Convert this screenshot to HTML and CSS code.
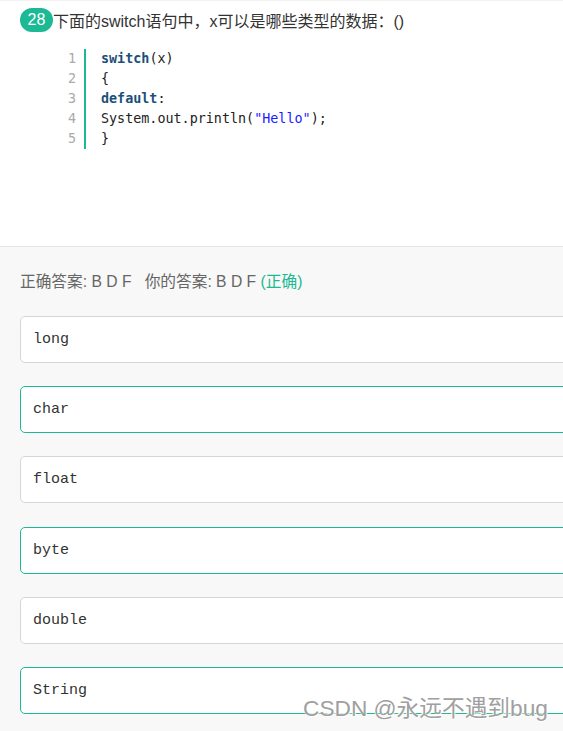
FILE: index.html
```
<!DOCTYPE html>
<html lang="zh">
<head>
<meta charset="utf-8">
<link rel="stylesheet" href="styles.css">
</head>
<body>
<div class="page">
  <section class="question">
    <div class="title">
      <span class="badge">28</span>
      <span class="title-text">下面的switch语句中，x可以是哪些类型的数据：()</span>
    </div>
    <div class="code">
      <div class="nums">
        <div>1</div><div>2</div><div>3</div><div>4</div><div>5</div>
      </div>
      <div class="lines">
        <div><span class="kw">switch</span>(x)</div>
        <div>{</div>
        <div><span class="kw">default</span>:</div>
        <div>System.out.println(<span class="str">"Hello"</span>);</div>
        <div>}</div>
      </div>
    </div>
  </section>
  <section class="answers">
    <div class="result">正确答案: B D F &nbsp; 你的答案: B D F <span class="ok">(正确)</span></div>
    <div class="options">
      <div class="opt">long</div>
      <div class="opt sel">char</div>
      <div class="opt">float</div>
      <div class="opt sel">byte</div>
      <div class="opt">double</div>
      <div class="opt sel">String</div>
    </div>
  </section>
  <div class="watermark">CSDN @永远不遇到bug</div>
</div>
</body>
</html>
```
FILE: styles.css
```
html, body {
  margin: 0;
  padding: 0;
  overflow: hidden;
}
body {
  font-family: "Liberation Sans", "Noto Sans CJK SC", sans-serif;
  color: #333;
  background: #f8f8f8;
}
.page {
  position: relative;
  width: 563px;
  height: 731px;
  overflow: hidden;
}
.question {
  background: #fff;
  height: 247px;
  border-bottom: 1px solid #e6e6e6;
  box-sizing: border-box;
  padding: 8px 20px 0;
  border-top: 1px solid #f2f2f2;
}
.title {
  display: flex;
  align-items: center;
  height: 24px;
  margin-top: -1px;
}
.badge {
  display: inline-flex;
  align-items: center;
  justify-content: center;
  width: 33px;
  height: 24px;
  border-radius: 12px;
  background: #1cb994;
  color: #fff;
  font-size: 16px;
}
.title-text {
  font-size: 16px;
  color: #333;
  margin-top: -1px;
}
.code {
  display: flex;
  margin-top: 17px;
  font-family: "DejaVu Sans Mono", monospace;
  font-size: 13.4px;
  line-height: 20px;
}
.nums {
  width: 64px;
  text-align: right;
  color: #aaa;
  padding-right: 8px;
  box-sizing: border-box;
}
.lines {
  border-left: 2px solid #1cb994;
  padding-left: 15px;
  color: #222;
}
.kw {
  font-weight: bold;
  color: #1b4f7a;
}
.str {
  color: #1a1aff;
}
.answers {
  padding: 24px 20px 0;
}
.result {
  font-size: 15.7px;
  color: #666;
  line-height: 22px;
}
.ok {
  color: #1cb994;
}
.options {
  display: flex;
  flex-direction: column;
  gap: 23.2px;
  margin-top: 23px;
  margin-right: -30px;
}
.opt {
  height: 47px;
  box-sizing: border-box;
  border: 1px solid #d6d6d6;
  border-radius: 5px;
  background: #fff;
  display: flex;
  align-items: center;
  padding-left: 12px;
  font-family: "Courier New", "Nimbus Mono PS", "FreeMono", "Liberation Mono", monospace;
  font-size: 15px;
  color: #333;
}
.opt.sel {
  border-color: #1cb994;
}
.watermark {
  position: absolute;
  left: 303px;
  top: 690px;
  font-size: 22.7px;
  color: #a0a0a0;
  text-shadow: 1px 1px 1px #fff, -1px -1px 1px #fff;
  white-space: nowrap;
}
```
